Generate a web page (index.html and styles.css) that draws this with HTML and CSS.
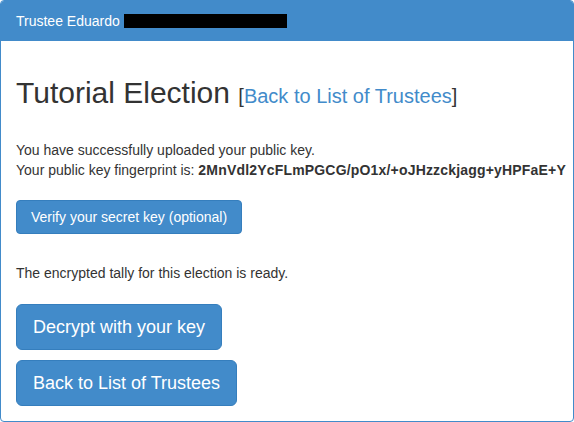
FILE: index.html
```html
<!DOCTYPE html>
<html>
<head>
<meta charset="utf-8">
<title>Trustee</title>
<link rel="stylesheet" href="styles.css">
</head>
<body>
<div class="panel">
  <div class="panel-heading">Trustee Eduardo <span class="redacted"></span></div>
  <div class="panel-body">
    <h2 class="title">Tutorial Election <span class="title-link">[<a href="#">Back to List of Trustees</a>]</span></h2>
    <p class="info">You have successfully uploaded your public key.<br>Your public key fingerprint is: <b>2MnVdl2YcFLmPGCG/pO1x/+oJHzzckjagg+yHPFaE+Y</b></p>
    <div class="verify-row"><a class="btn" href="#">Verify your secret key (optional)</a></div>
    <p class="tally">The encrypted tally for this election is ready.</p>
    <div class="actions">
      <a class="btn btn-lg" href="#">Decrypt with your key</a>
      <a class="btn btn-lg" href="#">Back to List of Trustees</a>
    </div>
  </div>
</div>
</body>
</html>
```
FILE: styles.css
```css
* { box-sizing: border-box; }
html, body { margin: 0; padding: 0; }
body {
  font-family: "Liberation Sans", Arial, sans-serif;
  font-size: 14px;
  line-height: 20px;
  color: #333;
  background: #fff;
}
.panel {
  width: 574px;
  border: 1px solid #428bca;
  border-radius: 4px;
  overflow: hidden;
}
.panel-heading {
  background: #428bca;
  color: #fff;
  padding: 10px 15px;
  height: 40px;
}
.redacted {
  display: inline-block;
  width: 163px;
  height: 14px;
  background: #000;
  vertical-align: -2px;
}
.panel-body {
  padding: 15px;
}
.title {
  margin: 20px 0 0;
  font-size: 30px;
  font-weight: 500;
  line-height: 33px;
  color: #333;
}
.title-link {
  font-size: 20px;
}
a { color: #428bca; text-decoration: none; }
.info { margin: 27px 0 0; white-space: nowrap; }
.info b { letter-spacing: 0.18px; }
.verify-row { margin-top: 20px; display: flex; }
.btn {
  display: inline-block;
  background: #428bca;
  border: 1px solid #357ebd;
  color: #fff;
  border-radius: 4px;
  padding: 6px 12px;
  font-size: 14px;
  line-height: 20px;
}
.verify-row .btn { padding: 6px 14px; }
.tally { margin: 29px 0 0; }
.actions {
  margin-top: 21px;
  display: flex;
  flex-direction: column;
  align-items: flex-start;
  gap: 10px;
}
.btn-lg {
  font-size: 18px;
  line-height: 24px;
  padding: 10px 16px;
  border-radius: 6px;
}
```
